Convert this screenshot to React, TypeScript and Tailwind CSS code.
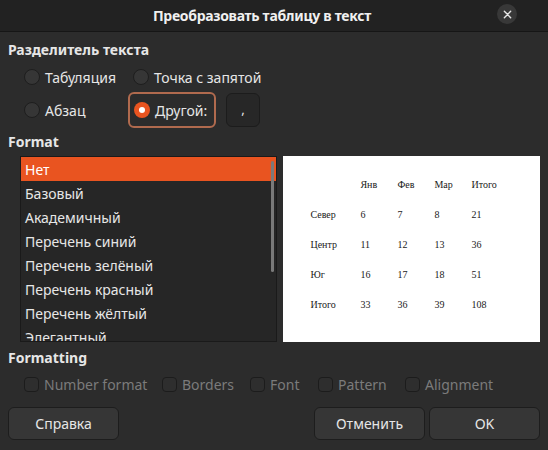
import React, { useState } from 'react';

const formats = [
  'Нет',
  'Базовый',
  'Академичный',
  'Перечень синий',
  'Перечень зелёный',
  'Перечень красный',
  'Перечень жёлтый',
  'Элегантный',
];

const preview = [
  ['', 'Янв', 'Фев', 'Мар', 'Итого'],
  ['Север', '6', '7', '8', '21'],
  ['Центр', '11', '12', '13', '36'],
  ['Юг', '16', '17', '18', '51'],
  ['Итого', '33', '36', '39', '108'],
];

const Radio = ({ checked }: { checked?: boolean }) =>
  checked ? (
    <span className="w-[16px] h-[16px] rounded-full bg-[#e95420] flex items-center justify-center shrink-0">
      <span className="w-[6px] h-[6px] rounded-full bg-white" />
    </span>
  ) : (
    <span className="w-[16px] h-[16px] rounded-full bg-[#363636] border border-[#1e1e1e] shrink-0" />
  );

const Check = ({ label }: { label: string }) => (
  <label className="flex items-center gap-[5px] text-[#7b7b7b] whitespace-nowrap">
    <span className="w-[15px] h-[15px] rounded-[4px] border border-[#1c1c1c] bg-[#2e2e2e] shrink-0" />
    {label}
  </label>
);

export default function App() {
  const [selected, setSelected] = useState(0);

  return (
    <div
      className="w-[548px] h-[450px] bg-[#2c2c2c] text-[#e6e6e6] text-[14px] flex flex-col overflow-hidden"
      style={{ fontFamily: '"Noto Sans", "Open Sans", sans-serif' }}
    >
      {/* Title bar */}
      <div className="h-[32px] bg-[#222222] border-b border-[#161616] flex items-center relative shrink-0 pr-[24px]">
        <div className="flex-1 text-center font-bold text-[14px] tracking-[-0.3px] text-[#f0f0f0]">
          Преобразовать таблицу в текст
        </div>
        <button className="absolute right-[31px] top-[4px] w-[20px] h-[20px] rounded-full bg-[#383838] flex items-center justify-center">
          <svg width="9" height="9" viewBox="0 0 10 10" stroke="#e6e6e6" strokeWidth="1.6" strokeLinecap="round">
            <path d="M1.5 1.5l7 7M8.5 1.5l-7 7" />
          </svg>
        </button>
      </div>

      <div className="flex-1 flex flex-col px-[8px]">
        {/* Separator */}
        <div className="font-bold mt-[8px] leading-[20px]">Разделитель текста</div>
        <div className="pl-[16px] grid grid-cols-[109px_auto] items-center mt-[6px]">
          <label className="flex items-center gap-[5px] h-[22px]">
            <Radio /> Табуляция
          </label>
          <label className="flex items-center gap-[5px] h-[22px]">
            <Radio /> Точка с запятой
          </label>
          <label className="flex items-center gap-[5px] h-[36px] mt-[4px]">
            <Radio /> Абзац
          </label>
          <div className="flex items-center gap-[10px] mt-[4px] -ml-[5px]">
            <label className="flex items-center gap-[5px] h-[36px] w-[88px] px-[4px] border-2 border-[#b06a4e] rounded-[6px]">
              <Radio checked /> Другой:
            </label>
            <div className="w-[34px] h-[34px] rounded-[6px] bg-[#272727] border border-[#1c1c1c] flex items-center justify-center text-[13px]">
              ,
            </div>
          </div>
        </div>

        {/* Format */}
        <div className="font-bold mt-[4px] leading-[20px]">Format</div>
        <div className="flex gap-[6px] mt-[4px] pl-[12px]">
          <div className="relative w-[259px] h-[186px] bg-[#262626] border border-[#1a1a1a] overflow-hidden">
            {formats.map((f, i) => (
              <div
                key={f}
                onClick={() => setSelected(i)}
                className={`h-[24px] flex items-center pl-[4px] ${i === selected ? 'bg-[#e95420] text-white' : ''}`}
              >
                {f}
              </div>
            ))}
            <div className="absolute right-[2px] top-[4px] w-[3px] h-[111px] rounded-full bg-[#7a7a7a]" />
          </div>
          <div
            className="w-[258px] h-[186px] bg-white text-[#1a1a1a] text-[10px] pt-[14px] pl-[27px]"
            style={{ fontFamily: '"Liberation Serif", serif' }}
          >
            {preview.map((row, r) => (
              <div key={r} className="grid grid-cols-[50px_37px_37px_37px_40px] h-[29.8px] items-center">
                {row.map((c, k) => (
                  <span key={k}>{c}</span>
                ))}
              </div>
            ))}
          </div>
        </div>

        {/* Formatting */}
        <div className="font-bold mt-[6px] leading-[20px]">Formatting</div>
        <div className="flex items-center pl-[16px] mt-[6px] h-[20px]">
          <div className="w-[138px] shrink-0"><Check label="Number format" /></div>
          <div className="w-[88px] shrink-0"><Check label="Borders" /></div>
          <div className="w-[68px] shrink-0"><Check label="Font" /></div>
          <div className="w-[87px] shrink-0"><Check label="Pattern" /></div>
          <Check label="Alignment" />
        </div>

        {/* Buttons */}
        <div className="flex mt-[13px] items-center">
          <button className="w-[111px] h-[33px] rounded-[6px] bg-[#363636] border border-[#1d1d1d] text-[#e6e6e6]">Справка</button>
          <div className="flex-1" />
          <button className="w-[111px] h-[33px] rounded-[6px] bg-[#363636] border border-[#1d1d1d] text-[#e6e6e6]">Отменить</button>
          <button className="w-[111px] h-[33px] ml-[4px] rounded-[6px] bg-[#363636] border border-[#1d1d1d] text-[#e6e6e6]">OK</button>
        </div>
      </div>
    </div>
  );
}
